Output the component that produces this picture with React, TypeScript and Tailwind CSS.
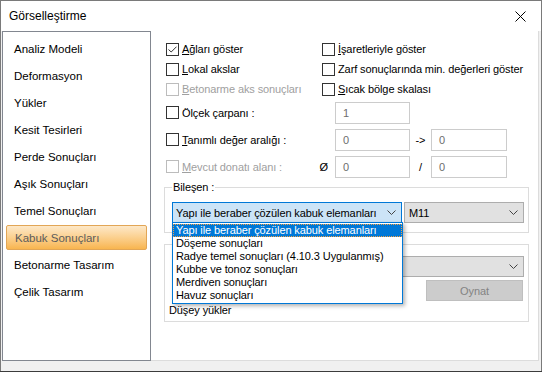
import React from "react";

const navItems = [
  "Analiz Modeli",
  "Deformasyon",
  "Yükler",
  "Kesit Tesirleri",
  "Perde Sonuçları",
  "Aşık Sonuçları",
  "Temel Sonuçları",
  "Kabuk Sonuçları",
  "Betonarme Tasarım",
  "Çelik Tasarım",
];

const listItems = [
  "Yapı ile beraber çözülen kabuk elemanları",
  "Döşeme sonuçları",
  "Radye temel sonuçları (4.10.3 Uygulanmış)",
  "Kubbe ve tonoz sonuçları",
  "Merdiven sonuçları",
  "Havuz sonuçları",
];

// small check box, like the win32 one
const Box = ({ checked = false, disabled = false }: { checked?: boolean; disabled?: boolean }) => (
  <span
    className={
      "w-[13px] h-[13px] shrink-0 mr-[3px] bg-white border flex items-center justify-center " +
      (disabled ? "border-[#bcbcbc]" : "border-[#333333]")
    }
  >
    {checked && (
      <svg width="9" height="7" viewBox="0 0 9 7">
        <path d="M0.5 3.5 L3.2 6 L8.5 0.7" fill="none" stroke="#333" strokeWidth="1" />
      </svg>
    )}
  </span>
);

const Chevron = () => (
  <svg width="9" height="5" viewBox="0 0 9 5">
    <path d="M0.5 0.5 L4.5 4.5 L8.5 0.5" fill="none" stroke="#444" strokeWidth="1" />
  </svg>
);

const Field = ({ value, w }: { value: string; w: string }) => (
  <div className={w + " h-[22px] border border-[#cccccc] pl-[7px] flex items-center text-[#6d6d6d]"}>{value}</div>
);

const App = () => {
  return (
    <div className="w-[542px] h-[372px] bg-[#3c3c3c] font-['Liberation_Sans',Arial,sans-serif] text-[11px] tracking-[-0.1px] text-black leading-[14px] whitespace-nowrap">
      <div className="h-[371px] border-x border-t border-[#7a7a7a] bg-[#f0f0f0] flex flex-col">
        {/* title bar */}
        <div className="h-[30px] bg-white flex items-center justify-between pl-[8px] pr-[15px] text-[12px] tracking-normal">
          <span>Görselleştirme</span>
          <svg width="11" height="11" viewBox="0 0 11 11">
            <path d="M0.5 0.5 L10.5 10.5 M10.5 0.5 L0.5 10.5" stroke="#000" strokeWidth="1" />
          </svg>
        </div>

        <div className="flex pl-[1px]">
          {/* side list */}
          <div className="w-[149px] h-[330px] border border-[#828790] bg-white pt-[3px] text-[11.5px] tracking-normal">
            {navItems.map((item) =>
              item === "Kabuk Sonuçları" ? (
                <div key={item} className="h-[27px] flex items-center">
                  <div className="ml-[3px] w-[141px] h-[25px] flex items-center pl-[8px] border border-[#e2a656] rounded-[2px] bg-gradient-to-b from-[#fde8c8] via-[#fbd08e] to-[#f8b54e] text-[#5b5b5b]">
                    {item}
                  </div>
                </div>
              ) : (
                <div key={item} className="h-[27px] flex items-center pl-[11px]">
                  {item}
                </div>
              )
            )}
          </div>

          {/* right panel */}
          <div className="w-[388px] h-[330px] bg-white border-r border-b border-[#dcdcdc] pt-[8px]">
            <div className="pl-[15px]">
              <div className="flex h-[20px] items-center">
                <div className="w-[156px] flex items-center">
                  <Box checked />
                  <span><span className="underline">A</span>ğları göster</span>
                </div>
                <div className="flex items-center">
                  <Box />
                  <span><span className="underline">İ</span>şaretleriyle göster</span>
                </div>
              </div>
              <div className="flex h-[20px] items-center">
                <div className="w-[156px] flex items-center">
                  <Box />
                  <span><span className="underline">L</span>okal akslar</span>
                </div>
                <div className="flex items-center">
                  <Box />
                  <span>Zarf sonuçlarında min. değerleri göster</span>
                </div>
              </div>
              <div className="flex h-[20px] items-center">
                <div className="w-[156px] flex items-center text-[#a0a0a0]">
                  <Box disabled />
                  <span><span className="underline">B</span>etonarme aks sonuçları</span>
                </div>
                <div className="flex items-center">
                  <Box />
                  <span><span className="underline">S</span>ıcak bölge skalası</span>
                </div>
              </div>

              <div className="flex h-[27px] items-center">
                <div className="w-[169px] flex items-center">
                  <Box />
                  <span>Ölçek çarpanı :</span>
                </div>
                <Field value="1" w="w-[75px]" />
              </div>
              <div className="flex h-[27px] items-center">
                <div className="w-[169px] flex items-center">
                  <Box />
                  <span><span className="underline">T</span>anımlı değer aralığı :</span>
                </div>
                <Field value="0" w="w-[75px]" />
                <span className="w-[21px] text-center">-&gt;</span>
                <Field value="0" w="w-[76px]" />
              </div>
              <div className="flex h-[27px] items-center">
                <div className="w-[169px] flex items-center">
                  <Box disabled />
                  <span className="text-[#a0a0a0]"><span className="underline">M</span>evcut donatı alanı :</span>
                  <span className="ml-auto mr-[7px]">Ø</span>
                </div>
                <Field value="0" w="w-[75px]" />
                <span className="w-[21px] text-center">/</span>
                <Field value="0" w="w-[76px]" />
              </div>
            </div>

            {/* Bileşen group */}
            <fieldset className="ml-[13px] w-[365px] border border-[#dcdcdc] pl-[7px] pr-[4px] pb-[9px]">
              <legend className="px-[1px] leading-[14px]">Bileşen :</legend>
              <div className="flex gap-[2px] mt-[8px]">
                <div className="relative">
                  <div className="w-[230px] h-[21px] bg-[#cce4f7] border border-[#0078d7] flex items-center justify-between pl-[3px] pr-[5px]">
                    <span>Yapı ile beraber çözülen kabuk elemanları</span>
                    <Chevron />
                  </div>
                  <div className="absolute left-0 top-[20px] z-10 w-[231px] bg-white border border-[#0078d7] py-[1px] shadow-[2px_2px_4px_rgba(0,0,0,0.3)]">
                    {listItems.map((it, i) => (
                      <div
                        key={it}
                        className={
                          "h-[13px] leading-[11px] pl-[2px] " +
                          (i === 0 ? "bg-[#0078d7] text-white border border-dotted border-[#f5a040]" : "border border-transparent")
                        }
                      >
                        {it}
                      </div>
                    ))}
                  </div>
                </div>
                <div className="w-[120px] h-[21px] bg-[#e1e1e1] border border-[#adadad] flex items-center justify-between pl-[4px] pr-[5px]">
                  <span>M11</span>
                  <Chevron />
                </div>
              </div>
            </fieldset>

            {/* lower group */}
            <div className="ml-[13px] mt-[11px] w-[365px] h-[78px] border border-[#dcdcdc] pl-[7px] pr-[4px] pt-[11px]">
              <div className="h-[21px] bg-[#e1e1e1] border border-[#adadad] flex items-center justify-end pr-[5px]">
                <Chevron />
              </div>
              <div className="flex justify-end mt-[3px] pr-[1px]">
                <div className="w-[97px] h-[21px] bg-[#cccccc] border border-[#bfbfbf] flex items-center justify-center text-[#838383]">
                  Oynat
                </div>
              </div>
              <div className="-ml-[3px] mt-[2px]">Düşey yükler</div>
            </div>
          </div>
        </div>
      </div>
    </div>
  );
};

export default App;
